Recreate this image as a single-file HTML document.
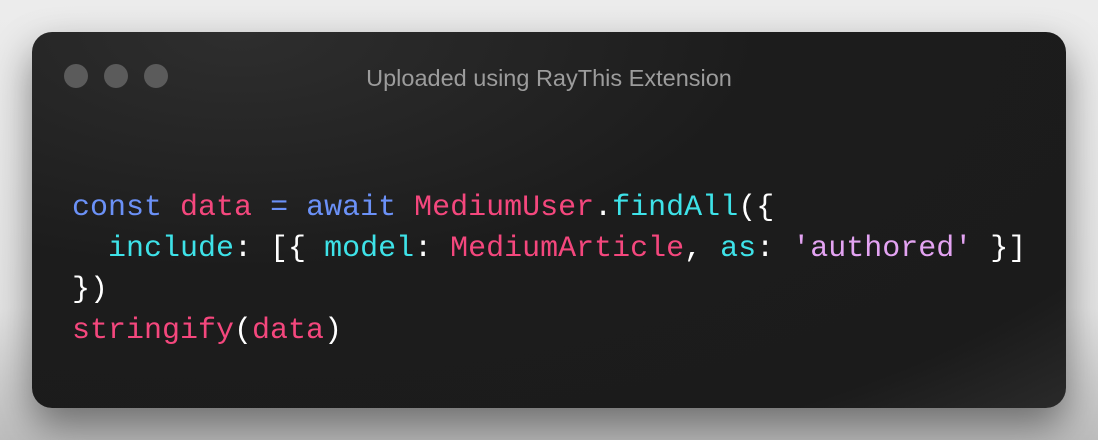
<!DOCTYPE html>
<html><head><style>
html,body{margin:0;padding:0;}
body{width:1098px;height:440px;background:linear-gradient(#ececec,#e4e4e4 70%,#bdbdbd);position:relative;overflow:hidden;font-family:"Liberation Sans",sans-serif;}
.win{position:absolute;left:32px;top:32px;width:1034px;height:376px;border-radius:20px;background:radial-gradient(ellipse at 20% 0%,#2e2e2e,#1c1c1c 45%,#1b1b1b 85%,#2a2a2a);box-shadow:0 18px 40px rgba(0,0,0,0.45);}
.dot{position:absolute;top:32px;width:24px;height:24px;border-radius:50%;background:#5b5b5b;}
.title{position:absolute;left:0;right:0;top:33px;text-align:center;color:#9c9c9c;font-size:23.5px;letter-spacing:0;}
pre{position:absolute;left:40px;top:156px;margin:0;font-family:"Liberation Mono",monospace;font-size:30px;line-height:41px;color:#fff;letter-spacing:0;}
.b{color:#6b91f7}.p{color:#f4477d}.c{color:#3ee2e8}.v{color:#e3a3f2}
</style></head><body>
<div class="win">
<div class="dot" style="left:32px"></div><div class="dot" style="left:72px"></div><div class="dot" style="left:112px"></div>
<div class="title">Uploaded using RayThis Extension</div>
<pre><span class="b">const</span> <span class="p">data</span> <span class="b">=</span> <span class="b">await</span> <span class="p">MediumUser</span>.<span class="c">findAll</span>({
  <span class="c">include</span>: [{ <span class="c">model</span>: <span class="p">MediumArticle</span>, <span class="c">as</span>: <span class="v">'authored'</span> }]
})
<span class="p">stringify</span>(<span class="p">data</span>)</pre>
</div>
</body></html>
